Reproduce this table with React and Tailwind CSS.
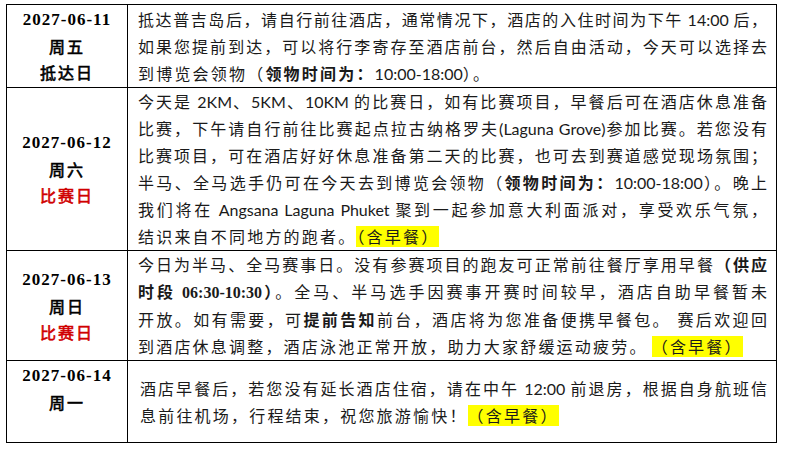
import React from "react"

const body = "font-['Lato','Noto_Sans_CJK_SC',sans-serif]"
const serif = "font-['Liberation_Serif','Noto_Sans_CJK_SC',serif]"

// Latin run in the body text: no extra tracking
function L({ children }) {
  return <span className="tracking-normal">{children}</span>
}

function HL({ children }) {
  return <span className="bg-[#ffff00] py-px">{children}</span>
}

// one line of the right column; full lines are spread to the cell width
function Line({ full, children }) {
  return full ? (
    <div className="whitespace-nowrap text-justify [text-align-last:justify] tracking-[1px]">{children}</div>
  ) : (
    <div className="whitespace-nowrap tracking-[2.2px]">{children}</div>
  )
}

function DayCell({ date, week, label, red, extra }) {
  return (
    <td className="border border-black text-center align-middle p-0">
      <div className={`${serif} font-bold text-[17px] leading-[26px] tracking-[1px]`}>{date}</div>
      <div className="font-['Noto_Sans_CJK_SC',sans-serif] font-normal text-[16px] leading-[26px] tracking-[2px] [-webkit-text-stroke:0.6px_currentColor]">
        {week}
      </div>
      {label && (
        <div
          className={`font-['Noto_Sans_CJK_SC',sans-serif] font-normal text-[16px] leading-[26px] tracking-[2px] [-webkit-text-stroke:0.6px_currentColor] ${
            red ? "text-[#d00000]" : "text-black"
          }`}
        >
          {label}
        </div>
      )}
      {extra && <div className="h-[26px]"></div>}
    </td>
  )
}

export default function App() {
  return (
    <div className="min-h-screen bg-white pl-[6px] pt-[4px]">
      <table className="w-[770px] table-fixed border-collapse text-black">
        <colgroup>
          <col className="w-[121px]" />
          <col className="w-[649px]" />
        </colgroup>
        <tbody>
          {/* 06-11 */}
          <tr className="h-[83px]">
            <DayCell date="2027-06-11" week="周五" label="抵达日" />
            <td className={`border border-black align-middle pl-[10px] pr-[8px] py-0 ${body} text-[16px] leading-[27px] text-[#1a1a1a]`}>
              <Line full>
                抵达普吉岛后，请自行前往酒店，通常情况下，酒店的入住时间为下午<L> 14:00 </L>后，
              </Line>
              <Line full>如果您提前到达，可以将行李寄存至酒店前台，然后自由活动，今天可以选择去</Line>
              <Line>
                到博览会领物（<b>领物时间为：</b>
                <L>10:00-18:00</L>）。
              </Line>
            </td>
          </tr>

          {/* 06-12 */}
          <tr className="h-[162px]">
            <DayCell date="2027-06-12" week="周六" label="比赛日" red />
            <td className={`border border-black align-middle pl-[10px] pr-[8px] py-0 ${body} text-[16px] leading-[27px] text-[#1a1a1a]`}>
              <Line full>
                今天是<L> 2KM</L>、<L>5KM</L>、<L>10KM </L>的比赛日，如有比赛项目，早餐后可在酒店休息准备
              </Line>
              <Line full>
                比赛，下午请自行前往比赛起点拉古纳格罗夫<L>(Laguna Grove)</L>参加比赛。若您没有
              </Line>
              <Line full>比赛项目，可在酒店好好休息准备第二天的比赛，也可去到赛道感觉现场氛围；</Line>
              <Line full>
                半马、全马选手仍可在今天去到博览会领物（<b>领物时间为：</b>
                <L>10:00-18:00</L>）。晚上
              </Line>
              <Line full>
                我们将在<L> Angsana Laguna Phuket </L>聚到一起参加意大利面派对，享受欢乐气氛，
              </Line>
              <Line>
                结识来自不同地方的跑者。<HL>（含早餐）</HL>
              </Line>
            </td>
          </tr>

          {/* 06-13 */}
          <tr className="h-[109px]">
            <DayCell date="2027-06-13" week="周日" label="比赛日" red />
            <td className={`border border-black align-middle pl-[10px] pr-[8px] py-0 ${body} text-[16px] leading-[27px] text-[#1a1a1a]`}>
              <Line full>
                今日为半马、全马赛事日。没有参赛项目的跑友可正常前往餐厅享用早餐<b>（供应</b>
              </Line>
              <Line full>
                <b>
                  时段<span className={`${serif} tracking-normal`}> 06:30-10:30</span>）
                </b>
                。全马、半马选手因赛事开赛时间较早，酒店自助早餐暂未
              </Line>
              <Line full>
                开放。如有需要，可<b>提前告知</b>前台，酒店将为您准备便携早餐包。 赛后欢迎回
              </Line>
              <Line>
                到酒店休息调整，酒店泳池正常开放，助力大家舒缓运动疲劳。<L> </L>
                <HL>（含早餐）</HL>
              </Line>
            </td>
          </tr>

          {/* 06-14 */}
          <tr className="h-[82px]">
            <DayCell date="2027-06-14" week="周一" extra />
            <td className={`border border-black align-middle pl-[12px] pr-[8px] py-0 ${body} text-[16px] leading-[27px] text-[#1a1a1a]`}>
              <Line full>
                酒店早餐后，若您没有延长酒店住宿，请在中午<L> 12:00 </L>前退房，根据自身航班信
              </Line>
              <Line>
                息前往机场，行程结束，祝您旅游愉快！<HL>（含早餐）</HL>
              </Line>
            </td>
          </tr>
        </tbody>
      </table>
    </div>
  )
}
